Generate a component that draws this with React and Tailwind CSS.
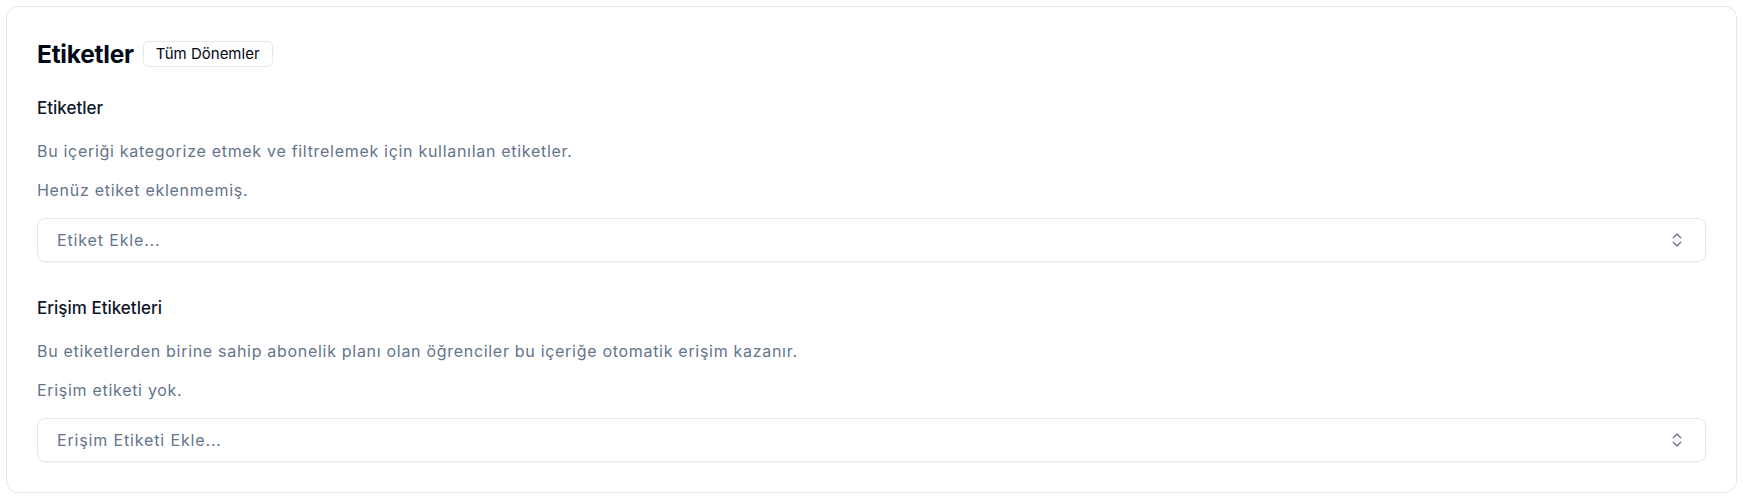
import { ChevronsUpDown } from "lucide-react";

function TagSelect({ placeholder }) {
    return (
        <button
            type="button"
            className="flex h-11 w-full items-center justify-between rounded-lg border border-[#e2e8f0] bg-white px-[19px] text-left text-[16px] tracking-[0.85px] text-[#64748b] shadow-[0_1px_2px_rgba(15,23,42,0.04)]"
        >
            <span>{placeholder}</span>
            <ChevronsUpDown size={18} strokeWidth={1.6} className="text-[#64748b]" />
        </button>
    );
}

function TagSection({ title, description, empty, placeholder, className }) {
    return (
        <div className={className}>
            <h3 className="text-[17px] font-medium leading-6 text-[#0f172a]">{title}</h3>
            <p className="mt-[19px] text-[16px] leading-6 tracking-[0.7px] text-[#64748b]">{description}</p>
            <p className="mt-[15.5px] text-[16px] leading-6 tracking-[0.7px] text-[#64748b]">{empty}</p>
            <div className="mt-[15.5px]">
                <TagSelect placeholder={placeholder} />
            </div>
        </div>
    );
}

export default function App() {
    return (
        <div className="min-h-screen bg-white p-[6px] font-['Inter',sans-serif]">
            <div className="rounded-xl border border-[#e2e8f0] bg-white px-[30px] pt-[31px] pb-[30px]">
                <div className="flex items-center gap-[9px]">
                    <h2 className="text-[24.5px] font-bold leading-8 tracking-[-0.01em] text-[#020817]">Etiketler</h2>
                    <span className="rounded-md border border-[#e2e8f0] px-[12px] text-[15px] leading-6 text-[#020817]">
                        Tüm Dönemler
                    </span>
                </div>

                {/* Genel etiketler */}
                <TagSection
                    className="mt-[25.5px]"
                    title="Etiketler"
                    description="Bu içeriği kategorize etmek ve filtrelemek için kullanılan etiketler."
                    empty="Henüz etiket eklenmemiş."
                    placeholder="Etiket Ekle..."
                />

                {/* Erişim etiketleri */}
                <TagSection
                    className="mt-[34px]"
                    title="Erişim Etiketleri"
                    description="Bu etiketlerden birine sahip abonelik planı olan öğrenciler bu içeriğe otomatik erişim kazanır."
                    empty="Erişim etiketi yok."
                    placeholder="Erişim Etiketi Ekle..."
                />
            </div>
        </div>
    );
}
